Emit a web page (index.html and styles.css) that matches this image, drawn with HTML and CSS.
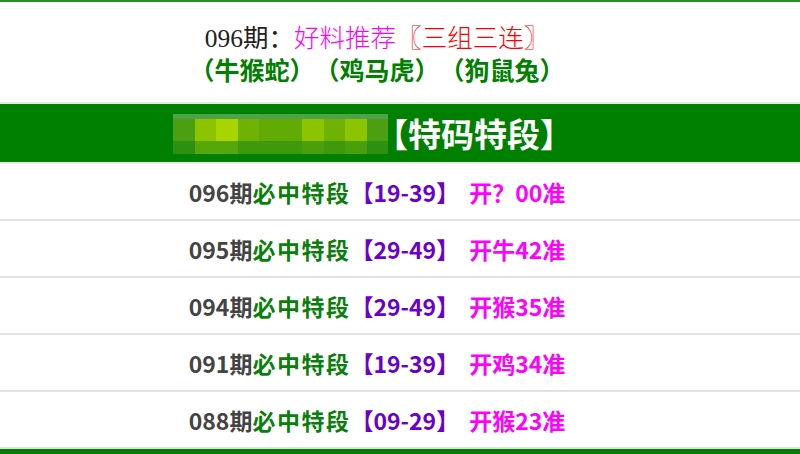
FILE: index.html
```html
<!DOCTYPE html>
<html lang="zh-CN">
<head>
<meta charset="utf-8">
<title>特码特段</title>
<link rel="stylesheet" href="styles.css">
</head>
<body>
<div class="page">
  <div class="header">
    <div class="line1"><span class="num">096期：</span><span class="pink">好料推荐</span><span class="red">〖三组三连〗</span></div>
    <div class="line2">（牛猴蛇）（鸡马虎）（狗鼠兔）</div>
  </div>
  <div class="banner">
    <div class="mosaic">
      <div class="mrow top"><span></span><span></span><span></span><span></span><span></span><span></span><span></span><span></span><span></span><span></span></div>
      <div class="mrow mid"><span class="c1"></span><span class="c2"></span><span class="c3"></span><span class="c4"></span><span class="c5"></span><span class="c5"></span><span class="c2"></span><span class="c4"></span><span class="c2"></span><span class="c1"></span></div>
      <div class="mrow bot"><span class="d1"></span><span class="d2"></span><span class="d2"></span><span class="d3"></span><span class="d3"></span><span class="d3"></span><span class="d4"></span><span class="d3"></span><span class="d4"></span><span class="d1"></span></div>
    </div>
    <div class="btitle">【特码特段】</div>
  </div>
  <div class="row"><span class="qi">096期</span><span class="g">必中特段</span><span class="p">【19-39】</span><span class="m">开？00准</span></div>
  <div class="row"><span class="qi">095期</span><span class="g">必中特段</span><span class="p">【29-49】</span><span class="m">开牛42准</span></div>
  <div class="row"><span class="qi">094期</span><span class="g">必中特段</span><span class="p">【29-49】</span><span class="m">开猴35准</span></div>
  <div class="row"><span class="qi">091期</span><span class="g">必中特段</span><span class="p">【19-39】</span><span class="m">开鸡34准</span></div>
  <div class="row"><span class="qi">088期</span><span class="g">必中特段</span><span class="p">【09-29】</span><span class="m">开猴23准</span></div>
  <div class="footer"></div>
</div>
</body>
</html>
```
FILE: styles.css
```css
html, body {
  margin: 0;
  padding: 0;
  background: #fff;
}
.page {
  width: 800px;
  border-top: 2px solid #2e8b2e;
  font-family: "Noto Sans CJK SC", sans-serif;
  text-spacing-trim: space-all;
}
.header {
  height: 100px;
  box-sizing: border-box;
  padding: 22px 46px 0 0;
  text-align: center;
}
.line1 {
  font-family: "Liberation Serif", "Noto Sans CJK SC", serif;
  font-size: 25.5px;
  line-height: 30px;
  font-weight: 300;
  color: #222;
}
.line1 .num { font-weight: normal; }
.line1 .pink { color: #ff00ff; }
.line1 .red { color: #ff0000; }
.line2 {
  font-size: 25px;
  line-height: 30px;
  font-weight: bold;
  color: #008000;
}
.banner {
  height: 58px;
  background: #008000;
  border-top: 2px solid #e6e6e6;
  border-bottom: 2px solid #e6e6e6;
  display: flex;
  align-items: center;
  padding-left: 173px;
}
.mosaic {
  display: flex;
  flex-direction: column;
  width: 215px;
  margin-top: 1px;
}
.mrow { display: flex; }
.mrow span { flex: 1; }
.mrow.top { height: 5px; }
.mrow.top span { background: #4ea24a; }
.mrow.mid { height: 22px; }
.mrow.bot { height: 13px; }
.c1 { background: #4c9e12; }
.c2 { background: #8cc402; }
.c3 { background: #a8d400; }
.c4 { background: #70b204; }
.c5 { background: #62aa04; }
.d1 { background: #2e9010; }
.d2 { background: #56a80a; }
.d3 { background: #3e9a0c; }
.d4 { background: #4aa00a; }
.btitle {
  color: #fff;
  font-size: 33px;
  font-weight: bold;
  line-height: 40px;
  margin-left: -13px;
}
.row {
  height: 55px;
  border-bottom: 2px solid #e2e2e2;
  display: flex;
  align-items: center;
  justify-content: center;
  padding-right: 46px;
  font-size: 23px;
  font-weight: bold;
}
.qi { color: #444; }
.g { color: #0b7f0b; letter-spacing: 1.5px; }
.p { color: #6a00cc; margin-right: 10px; }
.m { color: #ff00ff; }
.footer {
  height: 10px;
  background: #008000;
}
```
